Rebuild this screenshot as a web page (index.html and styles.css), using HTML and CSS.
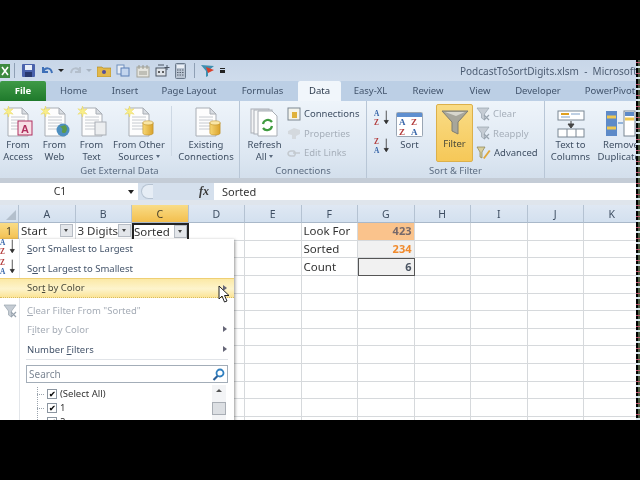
FILE: index.html
```html
<!DOCTYPE html>
<html>
<head>
    <title>PodcastToSortDigits.xlsm - Microsoft Excel</title>
    <link rel="stylesheet" href="styles.css">
</head>
<body>

<svg class="defs" width="0" height="0">
    <defs>
        <linearGradient id="gold" x1="0" y1="0" x2="1" y2="0"><stop offset="0" stop-color="#f7d774"/><stop offset="1" stop-color="#d9a22c"/></linearGradient>
        <symbol id="page" viewBox="0 0 32 32">
            <path d="M6 2h14l6 6v22H6z" fill="#fdfdfd" stroke="#a9aeb5"/>
            <path d="M20 2v6h6z" fill="#d9dde2" stroke="#a9aeb5"/>
            <path d="M9 11h14M9 14h14M9 17h14M9 20h14M9 23h14" stroke="#c6cad0"/>
        </symbol>
        <symbol id="star" viewBox="0 0 12 12">
            <path d="M6 0l1 4 4-1-3 3 3 3-4-1-1 4-1-4-4 1 3-3-3-3 4 1z" fill="#f8ee8a" stroke="#e8d24e" stroke-width=".5"/>
        </symbol>
        <symbol id="can" viewBox="0 0 14 18">
            <path d="M1 3v12c0 3 12 3 12 0V3z" fill="url(#gold)" stroke="#b98a22" stroke-width=".6"/>
            <ellipse cx="7" cy="3" rx="6" ry="2.4" fill="#f9e6a6" stroke="#b98a22" stroke-width=".6"/>
        </symbol>
        <symbol id="az" viewBox="0 0 22 22">
            <text x="0" y="9" class="sort-top">A</text>
            <text x="0" y="19" class="sort-bot">Z</text>
            <path d="M15 2v15M12.500 14l2.500 4 2.500-4z" stroke="#333" fill="#333"/>
        </symbol>
        <symbol id="za" viewBox="0 0 22 22">
            <text x="0" y="9" class="sort-bot">Z</text>
            <text x="0" y="19" class="sort-top">A</text>
            <path d="M15 2v15M12.500 14l2.500 4 2.500-4z" stroke="#333" fill="#333"/>
        </symbol>
        <symbol id="funnel-x" viewBox="0 0 14 14">
            <path d="M1 1h12L8.500 7v6l-3-2V7z" fill="#c5ccd4" stroke="#98a3ae" stroke-width=".7"/>
            <path d="M8 8l5 5M13 8l-5 5" stroke="#98a3ae" stroke-width="1.200"/>
        </symbol>
    </defs>
</svg>

<div class="screen">
<div class="app">

    <!-- title bar -->
    <div class="titlebar">
        <div class="qat">
            <svg class="qat-xl" width="10" height="14" viewBox="0 0 10 14"><rect width="10" height="14" fill="#3d8a3f"/><path d="M2 3l6 8M8 3l-6 8" stroke="#fff" stroke-width="1.600"/></svg>
            <i class="qat-sep"></i>
            <svg width="13" height="13" viewBox="0 0 13 13"><rect width="13" height="13" rx="1" fill="#4a62ac"/><rect x="3" y="1" width="7" height="5" fill="#e8eef8"/><rect x="3" y="8" width="7" height="5" fill="#28386e"/></svg>
            <svg class="qat-undo" width="12" height="12" viewBox="0 0 12 12"><path d="M2 2v5h5M2 7c2-5 8-5 9 1" fill="none" stroke="#3e70b8" stroke-width="2"/></svg>
            <b class="qat-arrow"></b>
            <svg class="qat-redo" width="12" height="12" viewBox="0 0 12 12"><path d="M10 2v5H5M10 7C8 2 2 2 1 8" fill="none" stroke="#b4bfcc" stroke-width="2"/></svg>
            <b class="qat-arrow dim"></b>
            <svg width="14" height="12" viewBox="0 0 14 12"><path d="M0 2h5l1 1h8v9H0z" fill="#e2b84a" stroke="#a98524" stroke-width=".6"/><circle cx="7" cy="7" r="2" fill="#55509a"/></svg>
            <svg width="14" height="13" viewBox="0 0 14 13"><rect x="1" y="1" width="7" height="9" fill="#e9eef5" stroke="#6f8fbe"/><rect x="5" y="4" width="8" height="8" fill="#c3d5ee" stroke="#5b7fb6"/></svg>
            <svg class="qat-cal" width="14" height="14" viewBox="0 0 14 14"><rect x="1" y="3" width="12" height="10" fill="#e4e4de" stroke="#a3a39a"/><path d="M3 1v4M7 1v4M11 1v4M3 8h8M3 10h8" stroke="#9a9a90"/></svg>
            <svg width="15" height="13" viewBox="0 0 15 13"><rect x="1" y="4" width="10" height="8" fill="#dfe4ea" stroke="#4b5563"/><path d="M3 1h6M12 1v5M9.500 3.500h5" stroke="#4b5563"/><circle cx="4" cy="8" r="1" fill="#333"/><circle cx="8" cy="8" r="1" fill="#333"/></svg>
            <svg width="11" height="16" viewBox="0 0 11 16"><rect x=".5" y=".5" width="10" height="15" rx="1" fill="#b9c4d2" stroke="#6b7a8c"/><rect x="2" y="2" width="7" height="3" fill="#e9eef5"/><path d="M2 7h7M2 9.500h7M2 12h7" stroke="#56616e" stroke-dasharray="1.500 1"/></svg>
            <i class="qat-sep second"></i>
            <svg width="15" height="14" viewBox="0 0 15 14"><path d="M1 1l5 6v6l2-1V7l6-5z" fill="#3d8fb0"/><path d="M6 3l8 3-6 3z" fill="#d8402c"/></svg>
            <span class="qat-more"></span>
        </div>
        <div class="doc-title">PodcastToSortDigits.xlsm &nbsp;-&nbsp; Microsoft</div>
    </div>

    <!-- tabs -->
    <div class="tabs">
        <div class="tab file">File</div>
        <div class="tab w-home">Home</div>
        <div class="tab w-insert">Insert</div>
        <div class="tab w-layout">Page Layout</div>
        <div class="tab w-formulas">Formulas</div>
        <div class="tab active">Data</div>
        <div class="tab w-easy">Easy-XL</div>
        <div class="tab w-review">Review</div>
        <div class="tab w-view">View</div>
        <div class="tab w-dev">Developer</div>
        <div class="tab w-power">PowerPivot</div>
    </div>

    <!-- ribbon -->
    <div class="ribbon">
        <section class="group g-external">
            <div class="group-body">
                <div class="big w36">
                    <span class="icon"><svg width="32" height="32"><use href="#page"/><use href="#star" width="11" height="11" x="1" y="0"/><rect x="16" y="15" width="14" height="14" fill="#f7dfe6" stroke="#b03060"/><text x="19" y="27" class="access">A</text></svg></span>
                    From<br>Access
                </div>
                <div class="big w37">
                    <span class="icon"><svg width="32" height="32"><use href="#page"/><use href="#star" width="11" height="11" x="1" y="0"/><circle cx="24" cy="24" r="6.500" fill="#4d8fc0"/><path d="M20 21c3 0 4 2 3 4s3 3 4 1 2-4-1-7z" fill="#5c9a4a"/></svg></span>
                    From<br>Web
                </div>
                <div class="big w37">
                    <span class="icon"><svg width="32" height="32"><use href="#page"/><use href="#star" width="11" height="11" x="1" y="0"/><rect x="19" y="16" width="11" height="13" fill="#eceef0" stroke="#a9aeb5"/></svg></span>
                    From<br>Text
                </div>
                <div class="big w58">
                    <span class="icon"><svg width="32" height="32"><use href="#page"/><use href="#star" width="11" height="11" x="1" y="0"/><use href="#can" width="12" height="16" x="19" y="14"/></svg></span>
                    From Other<br>Sources <b class="drop"></b>
                </div>
                <i class="vsep"></i>
                <div class="big w62">
                    <span class="icon"><svg width="32" height="32"><use href="#page"/><use href="#can" width="12" height="16" x="19" y="14"/></svg></span>
                    Existing<br>Connections
                </div>
            </div>
            <div class="group-label">Get External Data</div>
        </section>

        <section class="group g-conn">
            <div class="group-body">
                <div class="big w39">
                    <span class="icon"><svg width="32" height="32"><rect x="2" y="3" width="18" height="24" fill="#f2f3f4" stroke="#a9aeb5"/><rect x="5" y="4" width="18" height="24" fill="#f7f8f9" stroke="#a9aeb5"/><path d="M9 5h14l5 5v20H9z" fill="#fff" stroke="#a9aeb5"/><path d="M14 18a5 5 0 0 1 9-2M23 20a5 5 0 0 1-9 2" fill="none" stroke="#3f9b3f" stroke-width="2.200"/></svg></span>
                    Refresh<br>All <b class="drop"></b>
                </div>
                <div class="small-col">
                    <div class="small"><svg width="14" height="14" viewBox="0 0 14 14"><rect x="1" y="1" width="12" height="12" fill="#f4f4ec" stroke="#7d8792"/><rect x="5" y="5" width="5" height="6" fill="#e0b23c"/></svg>Connections</div>
                    <div class="small off"><svg width="14" height="14" viewBox="0 0 14 14"><path d="M1 5l6-3 6 2v4l-4 2v3H5V9L1 8z" fill="#d4d9de"/></svg>Properties</div>
                    <div class="small off"><svg width="14" height="14" viewBox="0 0 14 14"><path d="M1 7a3 3 0 0 1 3-2h3a3 3 0 0 1 0 5H4a3 3 0 0 1-3-3zM6 7h7" fill="none" stroke="#c3c9cf" stroke-width="1.500"/></svg>Edit Links</div>
                </div>
            </div>
            <div class="group-label">Connections</div>
        </section>

        <section class="group g-sort">
            <div class="group-body">
                <div class="sort-col">
                    <svg width="18" height="18"><use href="#az"/></svg>
                    <svg width="18" height="18"><use href="#za"/></svg>
                </div>
                <div class="big w35">
                    <span class="icon"><svg width="28" height="26" viewBox="0 0 28 26"><rect x=".5" y=".5" width="26" height="24" rx="1" fill="#fff" stroke="#9aa6b4"/><rect x="1" y="1" width="25" height="4" fill="#5e8fd0"/><text x="3" y="13" class="sort-top">A</text><text x="15" y="13" class="sort-bot">Z</text><text x="3" y="23" class="sort-bot">Z</text><text x="15" y="23" class="sort-top">A</text></svg></span>
                    Sort
                </div>
                <div class="filter-btn">
                    <svg width="28" height="26" viewBox="0 0 28 26"><path d="M1 2h26L17 13v12l-6-3v-9z" fill="#a7a69b" stroke="#7f7e73"/><path d="M4 3h20l-9 4z" fill="#d8d7cd"/></svg>
                    Filter
                </div>
                <div class="small-col">
                    <div class="small off"><svg width="14" height="14"><use href="#funnel-x"/></svg>Clear</div>
                    <div class="small off"><svg width="14" height="14"><use href="#funnel-x"/></svg>Reapply</div>
                    <div class="small"><svg width="15" height="14" viewBox="0 0 15 14"><path d="M1 1h8L6 6v6L4 11V6z" fill="#d9cf9c" stroke="#8a8150" stroke-width=".7"/><path d="M7 12l6-8 1.500 1-6 8z" fill="#e0a83a"/></svg>Advanced</div>
                </div>
            </div>
            <div class="group-label">Sort &amp; Filter</div>
        </section>

        <section class="group g-tools">
            <div class="group-body">
                <div class="big w45">
                    <span class="icon"><svg width="28" height="28" viewBox="0 0 28 28"><rect x="1" y="1" width="26" height="9" fill="#fff" stroke="#7a8794"/><path d="M4 4h8" stroke="#e0a020" stroke-width="2"/><path d="M14 4h9M4 7h9" stroke="#7fa0c8"/><path d="M14 11v5M11 14l3 4 3-4z" fill="#444" stroke="#444"/><rect x="1" y="19" width="26" height="8" fill="#fff" stroke="#7a8794"/><path d="M10 19v8M19 19v8" stroke="#7a8794"/></svg></span>
                    Text to<br>Columns
                </div>
                <div class="big w58 dup">
                    <span class="icon"><svg width="32" height="28" viewBox="0 0 32 28"><rect x="1" y="1" width="11" height="25" fill="#5d8ac8"/><path d="M2 7h9M2 18h9" stroke="#f0c850" stroke-width="3"/><path d="M13 13h5" stroke="#3f7ac0"/><rect x="19" y="1" width="11" height="25" fill="#fff" stroke="#7a8794"/><path d="M20 4h9" stroke="#5d8ac8" stroke-width="4"/><path d="M20 9h9" stroke="#f0c850" stroke-width="3"/></svg></span>
                    Remove<br>Duplicates
                </div>
            </div>
        </section>
    </div>

    <!-- formula bar -->
    <div class="formula-bar">
        <div class="name-box"><span>C1</span><b class="fb-arrow"></b></div>
        <div class="fx-area"><span class="pill"></span><span class="fx">fx</span></div>
        <div class="formula">Sorted</div>
    </div>

    <!-- sheet -->
    <div class="sheet-wrap">
        <div class="sheet">
            <div class="head corner"><i></i></div><div class="head">A</div><div class="head">B</div><div class="head sel">C</div><div class="head">D</div><div class="head">E</div><div class="head">F</div><div class="head">G</div><div class="head">H</div><div class="head">I</div><div class="head">J</div><div class="head">K</div>

            <div class="rowhead sel">1</div>
            <div class="cell"><span>Start</span><b class="fbtn"></b></div>
            <div class="cell"><span>3 Digits</span><b class="fbtn"></b></div>
            <div class="cell current"><span>Sorted</span><b class="fbtn"></b></div>
            <div class="cell"></div><div class="cell"></div>
            <div class="cell"><span>Look For</span></div>
            <div class="cell num look">423</div>
            <div class="cell"></div><div class="cell"></div><div class="cell"></div><div class="cell"></div>

            <div class="rowhead">2</div><div class="cell"></div><div class="cell"></div><div class="cell"></div><div class="cell"></div><div class="cell"></div>
            <div class="cell"><span>Sorted</span></div>
            <div class="cell num sorted">234</div>
            <div class="cell"></div><div class="cell"></div><div class="cell"></div><div class="cell"></div>

            <div class="rowhead">3</div><div class="cell"></div><div class="cell"></div><div class="cell"></div><div class="cell"></div><div class="cell"></div>
            <div class="cell"><span>Count</span></div>
            <div class="cell num count">6</div>
            <div class="cell"></div><div class="cell"></div><div class="cell"></div><div class="cell"></div>

            <div class="rowhead">4</div><div class="cell"></div><div class="cell"></div><div class="cell"></div><div class="cell"></div><div class="cell"></div><div class="cell"></div><div class="cell"></div><div class="cell"></div><div class="cell"></div><div class="cell"></div><div class="cell"></div>
            <div class="rowhead">5</div><div class="cell"></div><div class="cell"></div><div class="cell"></div><div class="cell"></div><div class="cell"></div><div class="cell"></div><div class="cell"></div><div class="cell"></div><div class="cell"></div><div class="cell"></div><div class="cell"></div>
            <div class="rowhead">6</div><div class="cell"></div><div class="cell"></div><div class="cell"></div><div class="cell"></div><div class="cell"></div><div class="cell"></div><div class="cell"></div><div class="cell"></div><div class="cell"></div><div class="cell"></div><div class="cell"></div>
            <div class="rowhead">7</div><div class="cell"></div><div class="cell"></div><div class="cell"></div><div class="cell"></div><div class="cell"></div><div class="cell"></div><div class="cell"></div><div class="cell"></div><div class="cell"></div><div class="cell"></div><div class="cell"></div>
            <div class="rowhead">8</div><div class="cell"></div><div class="cell"></div><div class="cell"></div><div class="cell"></div><div class="cell"></div><div class="cell"></div><div class="cell"></div><div class="cell"></div><div class="cell"></div><div class="cell"></div><div class="cell"></div>
            <div class="rowhead">9</div><div class="cell"></div><div class="cell"></div><div class="cell"></div><div class="cell"></div><div class="cell"></div><div class="cell"></div><div class="cell"></div><div class="cell"></div><div class="cell"></div><div class="cell"></div><div class="cell"></div>
            <div class="rowhead">10</div><div class="cell"></div><div class="cell"></div><div class="cell"></div><div class="cell"></div><div class="cell"></div><div class="cell"></div><div class="cell"></div><div class="cell"></div><div class="cell"></div><div class="cell"></div><div class="cell"></div>
            <div class="rowhead">11</div><div class="cell"></div><div class="cell"></div><div class="cell"></div><div class="cell"></div><div class="cell"></div><div class="cell"></div><div class="cell"></div><div class="cell"></div><div class="cell"></div><div class="cell"></div><div class="cell"></div>
            <div class="rowhead">12</div><div class="cell"></div><div class="cell"></div><div class="cell"></div><div class="cell"></div><div class="cell"></div><div class="cell"></div><div class="cell"></div><div class="cell"></div><div class="cell"></div><div class="cell"></div><div class="cell"></div>
        </div>

        <!-- filter dropdown, lies over the sheet -->
        <div class="menu">
            <div class="item"><svg class="item-icon" width="18" height="18"><use href="#az"/></svg><u>S</u>ort Smallest to Largest</div>
            <div class="item"><svg class="item-icon" width="18" height="18"><use href="#za"/></svg>S<u>o</u>rt Largest to Smallest</div>
            <div class="item hot">Sor<u>t</u> by Color<b class="more"></b></div>
            <div class="gap"></div>
            <div class="item off"><svg class="item-icon" width="14" height="14"><use href="#funnel-x"/></svg><u>C</u>lear Filter From "Sorted"</div>
            <div class="item off">F<u>i</u>lter by Color<b class="more"></b></div>
            <div class="item">Number <u>F</u>ilters<b class="more"></b></div>
            <div class="menu-sep"></div>
            <div class="search">
                <span>Search</span>
                <svg width="13" height="13" viewBox="0 0 13 13"><circle cx="8" cy="5" r="3.500" fill="none" stroke="#2f7fc0" stroke-width="1.800"/><path d="M5.500 8L1.500 12" stroke="#2a5f98" stroke-width="2.200"/></svg>
            </div>
            <div class="list">
                <div class="checks">
                    <div class="check-row"><i class="branch"></i><b class="check">&#10004;</b>(Select All)</div>
                    <div class="check-row"><i class="branch"></i><b class="check">&#10004;</b>1</div>
                    <div class="check-row"><i class="branch"></i><b class="check">&#10004;</b>2</div>
                </div>
                <div class="scroll"><b class="up"></b><i class="thumb"></i></div>
            </div>
        </div>

        <svg class="cursor" width="13" height="18" viewBox="0 0 13 18"><path d="M1 1v13l3-3 2.500 6 2.500-1-2.500-5.500H11z" fill="#fff" stroke="#222"/></svg>
    </div>

</div>
<div class="noise"></div>
</div>

</body>
</html>
```

FILE: styles.css
```css
html, body {
    margin: 0;
    background: #000;
}
body {
    font-family: "Noto Sans", "Open Sans", sans-serif;
    font-size: 10px;
    color: #3f4f63;
}
.defs {
    position: absolute;
}

.screen {
    width: 640px;
    height: 480px;
    padding-top: 60px;
    box-sizing: border-box;
    display: flex;
    align-items: flex-start;
    overflow: hidden;
    background: #000;
}
.app {
    width: 636px;
    height: 360px;
    overflow: hidden;
    flex: none;
    background: #fff;
    filter: blur(0.45px);
}
.noise {
    width: 4px;
    height: 360px;
    flex: none;
    background:
        repeating-linear-gradient(0deg, #d8e6ee 0 2px, transparent 2px 5px, #c05a70 5px 6px, transparent 6px 11px),
        repeating-linear-gradient(90deg, #000 0 2px, #4a5a40 2px 4px);
}

/* title bar */
.titlebar {
    height: 21px;
    display: flex;
    align-items: center;
    background: linear-gradient(#c8d6e8, #cfdcec);
}
.qat {
    width: 460px;
    flex: none;
    display: flex;
    align-items: center;
    gap: 5px;
}
.qat svg {
    flex: none;
}
.qat-sep {
    width: 1px;
    height: 15px;
    margin-right: 2px;
    background: #8fa0b5;
}
.qat-sep.second {
    margin: 0 0 0 3px;
}
.qat-xl {
    margin-right: -1px;
}
.qat-undo {
    margin-left: 1px;
}
.qat-cal {
    margin-left: 1px;
}
.qat-arrow {
    width: 0;
    height: 0;
    border: 3px solid transparent;
    border-top: 3px solid #222;
    border-bottom: none;
}
.qat-arrow.dim {
    margin-left: -1px;
    border-top-color: #a8b4c2;
}
.qat-redo {
    margin-left: 1px;
}
.qat-more {
    width: 5px;
    height: 5px;
    border-top: 1px solid #222;
    border-bottom: 3px solid #222;
    box-sizing: border-box;
}
.doc-title {
    white-space: nowrap;
    font-size: 10px;
    color: #4c5c72;
}

/* tabs */
.tabs {
    height: 20px;
    display: flex;
    align-items: stretch;
    white-space: nowrap;
    background: #bccfe5;
}
.tab {
    flex: none;
    line-height: 20px;
    text-align: center;
    font-size: 9.5px;
    color: #41536b;
}
.tab.file {
    width: 46px;
    color: #fff;
    font-weight: bold;
    background: linear-gradient(#3f9a46, #1f7a2c);
    border-radius: 2px 2px 0 0;
}
.tab.active {
    width: 43px;
    color: #2c3a4c;
    background: #f1f6fb;
    border-radius: 2px 2px 0 0;
}
.w-home { width: 55px; }
.w-insert { width: 48px; }
.w-layout { width: 80px; }
.w-formulas { width: 67px; margin-right: 2px; }
.w-easy { width: 59px; }
.w-review { width: 56px; }
.w-view { width: 48px; }
.w-dev { width: 68px; }
.w-power { width: 76px; }

/* ribbon */
.ribbon {
    height: 77px;
    display: flex;
    background: linear-gradient(#eef4fa, #dde7f2 70%, #d3dfec);
    border-bottom: 5px solid #c4ccd6;
    line-height: 11.5px;
}
.group {
    flex: none;
    box-sizing: border-box;
    border-right: 1px solid #b8c6d6;
    display: flex;
    flex-direction: column;
}
.g-external { width: 240px; }
.g-conn { width: 127px; }
.g-sort { width: 178px; }
.g-tools { width: 91px; border-right: none; }
.group-body {
    height: 64px;
    display: flex;
    padding-top: 3px;
    box-sizing: border-box;
}
.group-label {
    text-align: center;
    line-height: 11px;
    font-size: 9.5px;
    color: #5d6d82;
}
.big {
    flex: none;
    text-align: center;
    white-space: nowrap;
    font-size: 9.5px;
}
.icon {
    display: flex;
    justify-content: center;
    align-items: flex-end;
    height: 34px;
    margin-bottom: 1px;
}
.w35 { width: 35px; }
.w36 { width: 36px; }
.w37 { width: 37px; }
.w39 { width: 39px; }
.w45 { width: 45px; }
.w58 { width: 58px; }
.w62 { width: 62px; }
.vsep {
    width: 1px;
    height: 50px;
    margin: 2px 3px 0 3px;
    flex: none;
    background: #cdd8e4;
}
.g-conn .w39 {
    margin-left: 5px;
}
.g-tools .big {
    margin-left: 3px;
}
.g-tools .dup {
    margin-left: -1px;
}
.drop {
    display: inline-block;
    vertical-align: middle;
    border: 2.5px solid transparent;
    border-top: 3px solid #5a6a7e;
    border-bottom: none;
}
.small-col {
    display: flex;
    flex-direction: column;
    margin-left: 3px;
}
.small {
    height: 19.5px;
    display: flex;
    align-items: center;
    gap: 3px;
    font-size: 9.5px;
    white-space: nowrap;
}
.small.off {
    color: #a6afba;
}
.sort-col {
    width: 18px;
    margin-left: 7px;
    padding-top: 5px;
    display: flex;
    flex-direction: column;
    gap: 10px;
    flex: none;
}
.sort-top, .sort-bot {
    font-family: "Liberation Serif", serif;
    font-size: 9px;
    font-weight: bold;
}
.sort-top { fill: #3564a8; }
.sort-bot { fill: #b23a3a; }
.access {
    font-family: "Liberation Sans", sans-serif;
    font-size: 11px;
    font-weight: bold;
    fill: #b03060;
}
.filter-btn {
    width: 37px;
    height: 58px;
    margin-left: 9px;
    padding-top: 4px;
    flex: none;
    box-sizing: border-box;
    display: flex;
    flex-direction: column;
    align-items: center;
    gap: 3px;
    font-size: 9.5px;
    color: #4a4a3a;
    background: linear-gradient(#f9dc86, #f6c858);
    border: 1px solid #dcb04a;
    border-radius: 2px;
}

/* formula bar */
.formula-bar {
    height: 17px;
    display: flex;
    line-height: 17px;
    font-size: 10.5px;
}
.name-box {
    width: 138px;
    flex: none;
    position: relative;
    text-align: center;
    padding-right: 18px;
    box-sizing: border-box;
    color: #333;
    background: #fff;
}
.fb-arrow {
    position: absolute;
    right: 4px;
    top: 7px;
    border: 3px solid transparent;
    border-top: 4px solid #222;
    border-bottom: none;
}
.fx-area {
    width: 76px;
    flex: none;
    display: flex;
    align-items: center;
    justify-content: space-between;
    padding: 0 5px 0 3px;
    box-sizing: border-box;
    background: #d5e0ed;
}
.pill {
    width: 12px;
    height: 15px;
    border: 1px solid #b6c3d2;
    border-right: none;
    border-radius: 8px 0 0 8px;
    box-sizing: border-box;
    background: #e6edf5;
}
.fx {
    font-family: "Liberation Serif", serif;
    font-style: italic;
    font-weight: bold;
    font-size: 12px;
    color: #3a3a3a;
}
.formula {
    flex: 1;
    padding-left: 8px;
    font-size: 11px;
    color: #333;
    background: #fff;
}

/* sheet */
.sheet-wrap {
    position: relative;
    height: 220px;
    padding-top: 5px;
    box-sizing: border-box;
    background: #dfe5ec;
    overflow: hidden;
}
.sheet {
    width: 641px;
    display: grid;
    grid-template-columns: 19px repeat(11, 56.5px);
    grid-template-rows: 18px;
    grid-auto-rows: 17.65px;
    background: #fff;
}
.head {
    text-align: center;
    line-height: 18px;
    font-size: 10.5px;
    color: #3f4f63;
    background: linear-gradient(#dfe8f3, #d3e0ef);
    border-right: 1px solid #b4c2d2;
    border-bottom: 1px solid #a9b8c9;
    box-sizing: border-box;
}
.head.sel, .rowhead.sel {
    color: #47402a;
    background: linear-gradient(#f9dc86, #f3bf4e);
}
.corner {
    position: relative;
}
.corner i {
    position: absolute;
    right: 2px;
    bottom: 2px;
    border-left: 10px solid transparent;
    border-bottom: 10px solid #b3bfcc;
}
.rowhead {
    text-align: center;
    line-height: 17px;
    font-size: 10.5px;
    background: #dfe8f3;
    border-right: 1px solid #a9b8c9;
    border-bottom: 1px solid #b4c2d2;
    box-sizing: border-box;
}
.cell {
    display: flex;
    align-items: center;
    justify-content: space-between;
    padding: 0 2px 1px;
    box-sizing: border-box;
    min-width: 0;
    white-space: nowrap;
    font-size: 11.5px;
    color: #333;
    border-right: 1px solid #d6d9dc;
    border-bottom: 1px solid #d6d9dc;
}
.cell.current {
    border: 2px solid #222;
    padding: 0;
}
.cell.num {
    justify-content: flex-end;
    font-weight: bold;
    font-size: 11px;
}
.look {
    color: #76696a;
    background: #fac38c;
    font-weight: normal;
}
.sorted {
    color: #f08a2c;
    background: #f1f1f1;
}
.count {
    color: #4a5462;
    background: #f1f1f1;
    border: 1px solid #555;
}
.fbtn {
    width: 13px;
    height: 13px;
    flex: none;
    position: relative;
    background: #e3e6ea;
    border: 1px solid #b6bcc4;
    box-sizing: border-box;
}
.fbtn::after {
    content: "";
    position: absolute;
    left: 3px;
    top: 4px;
    border: 2.5px solid transparent;
    border-top: 3px solid #444;
    border-bottom: none;
}

/* dropdown menu */
.menu {
    position: absolute;
    left: 0;
    top: 39px;
    width: 234px;
    height: 190px;
    box-sizing: border-box;
    background: #fff;
    background-image: linear-gradient(90deg, transparent 19px, #e3e6ea 19px 20px, transparent 20px);
    box-shadow: 1px 1px 3px rgba(60, 60, 60, 0.55);
    font-size: 9.5px;
    color: #44546a;
}
.item {
    position: relative;
    height: 19.5px;
    line-height: 19px;
    padding-left: 27px;
    white-space: nowrap;
}
.item-icon {
    position: absolute;
    left: 0;
    top: -1px;
}
.item.off {
    color: #a5acb6;
}
.item.off .item-icon {
    left: 3px;
    top: 3px;
}
.item.hot {
    color: #4a4a3a;
    background: linear-gradient(#fbe9a6, #fdf4cd 55%, #fbe497);
    border-top: 1px solid #efcf73;
    border-bottom: 1px dotted #d9bb5e;
    box-sizing: border-box;
    line-height: 17px;
}
.gap {
    height: 3px;
}
.more {
    position: absolute;
    right: 7px;
    top: 6px;
    border: 3px solid transparent;
    border-left: 4px solid #667;
    border-right: none;
}
.menu-sep {
    height: 1px;
    margin: 0 6px 5px 26px;
    background: #e1e4e8;
}
.search {
    height: 18px;
    margin: 0 6px 0 26px;
    padding: 0 2px;
    display: flex;
    align-items: center;
    justify-content: space-between;
    box-sizing: border-box;
    border: 1px solid #a3adb8;
    font-size: 10px;
    color: #7d8794;
}
.list {
    display: flex;
    justify-content: space-between;
    margin: 2px 8px 0 26px;
}
.checks {
    padding-left: 11px;
    padding-top: 2px;
}
.check-row {
    height: 14px;
    line-height: 14px;
    display: flex;
    align-items: center;
    gap: 3px;
    font-size: 9.5px;
    color: #333;
}
.branch {
    width: 8px;
    height: 14px;
    box-sizing: border-box;
    margin-right: -1px;
    background:
        linear-gradient(90deg, #9aa3ad 50%, transparent 50%) left center / 2px 1px repeat-x,
        linear-gradient(#9aa3ad 50%, transparent 50%) left top / 1px 2px repeat-y;
}
.check {
    width: 10px;
    height: 10px;
    box-sizing: border-box;
    border: 1px solid #8b95a0;
    text-align: center;
    font-size: 8px;
    line-height: 8px;
    color: #111;
    background: #fff;
}
.scroll {
    width: 14px;
    position: relative;
    height: 40px;
    background: #f3f4f6;
    padding-top: 11px;
    box-sizing: border-box;
}
.up {
    position: absolute;
    left: 4px;
    top: 4px;
    border: 3px solid transparent;
    border-bottom: 3px solid #555;
    border-top: none;
}
.thumb {
    display: block;
    height: 13px;
    margin-top: 6px;
    background: #dcdfe3;
    border: 1px solid #a9aeb5;
    box-sizing: border-box;
}
.cursor {
    position: absolute;
    left: 218px;
    top: 85px;
}
```
